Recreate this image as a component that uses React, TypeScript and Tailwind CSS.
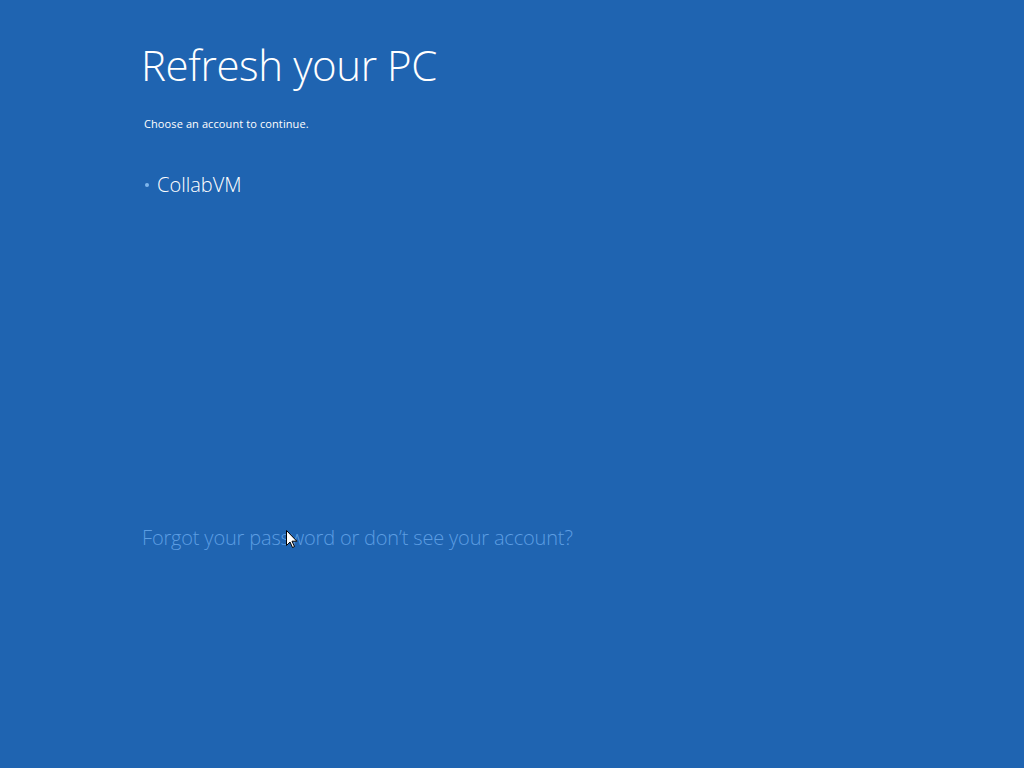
import React from "react";

function Cursor() {
  return (
    <svg
      className="absolute left-[286px] top-[530px]"
      width="12"
      height="19"
      viewBox="0 0 12 19"
    >
      <path
        d="M0.5 0.5 L0.5 15.5 L4 12 L6.5 17.5 L8.5 16.6 L6 11.2 L10.8 11.2 Z"
        fill="#fff"
        stroke="#000"
        strokeWidth="1"
        strokeLinejoin="round"
      />
    </svg>
  );
}

export default function App() {
  return (
    <div
      className="relative w-[1024px] h-[768px] overflow-hidden bg-[#1f64b1] text-white"
      style={{ fontFamily: '"Open Sans", "Noto Sans", sans-serif' }}
    >
      <div className="pl-[141px] pt-[38px] flex flex-col">
        <h1 className="text-[42px] leading-[54px] font-light tracking-[-0.4px]">
          Refresh your PC
        </h1>
        <p className="mt-[24px] pl-[3px] text-[11px] leading-[16px] tracking-[0.1px]">
          Choose an account to continue.
        </p>
        <div className="mt-[41px] flex items-center gap-[8px] pl-[3px]">
          <span className="w-[4px] h-[4px] ml-[1px] rounded-full bg-[#7fb6ec]" />
          <span className="text-[20px] leading-[24px] font-light">CollabVM</span>
        </div>
        <button className="mt-[329px] self-start text-left pl-[1px] text-[20px] leading-[24px] font-light tracking-[-0.17px] text-[#5c9de2]">
          Forgot your password or don’t see your account?
        </button>
      </div>
      <Cursor />
    </div>
  );
}
